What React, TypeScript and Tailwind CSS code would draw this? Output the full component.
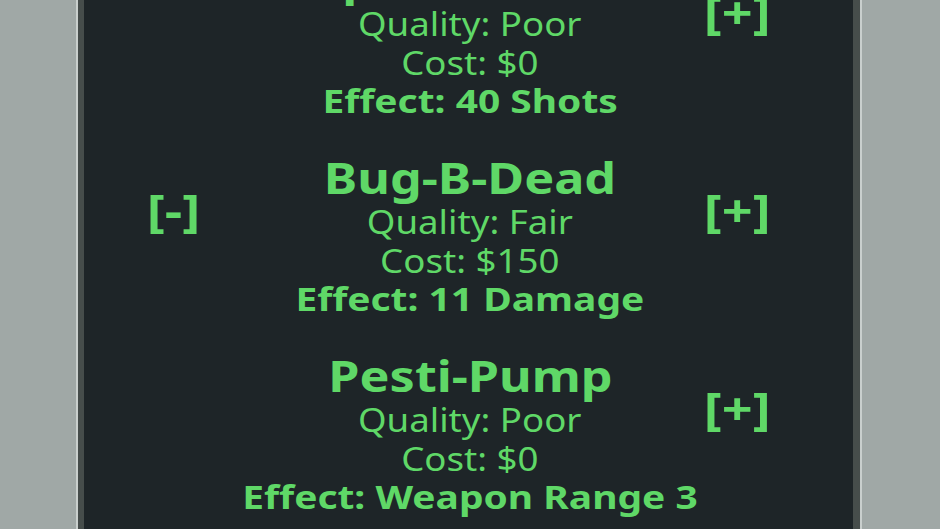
import React from "react";

type Item = {
  name: string;
  quality: string;
  cost: string;
  effect: string;
  minus: boolean;
};

const items: Item[] = [
  { name: "Spritz Bottle", quality: "Poor", cost: "$0", effect: "40 Shots", minus: false },
  { name: "Bug-B-Dead", quality: "Fair", cost: "$150", effect: "11 Damage", minus: true },
  { name: "Pesti-Pump", quality: "Poor", cost: "$0", effect: "Weapon Range 3", minus: false },
];

function Row({ item }: { item: Item }) {
  return (
    <div className="flex h-[166.5px]">
      <div className="w-[176px] flex justify-center pl-[3px]">
        {item.minus && (
          <span className="mt-[37px] block h-[42px] text-[44px] leading-[42px] font-bold scale-x-[1.24] whitespace-nowrap">
            [-]
          </span>
        )}
      </div>
      <div className="w-[420px] flex flex-col items-center">
        <p className="text-[43px] leading-[51px] font-bold scale-x-[1.17] whitespace-nowrap">{item.name}</p>
        <p className="text-[33px] leading-[38.5px] scale-x-[1.11] whitespace-nowrap">Quality: {item.quality}</p>
        <p className="text-[33px] leading-[38.5px] scale-x-[1.11] whitespace-nowrap">Cost: {item.cost}</p>
        <p className="text-[33px] leading-[38.5px] font-bold scale-x-[1.18] whitespace-nowrap">Effect: {item.effect}</p>
      </div>
      <div className="w-[172px] flex justify-start pl-[30px]">
        <span className="mt-[37px] block h-[42px] text-[44px] leading-[42px] font-bold scale-x-[1.23] whitespace-nowrap">
          [+]
        </span>
      </div>
    </div>
  );
}

export default function App() {
  return (
    <div className="h-[529px] w-[940px] overflow-hidden bg-[#a0a8a6] flex" style={{ fontFamily: '"Noto Sans", sans-serif' }}>
      <div className="ml-[76px] w-[786px] h-full border-x-2 border-[#c9cfcd]">
        <div className="h-full border-l-[6px] border-r-[7px] border-[#464d4b] bg-[#1e2528] overflow-hidden text-[#5fd867]">
          <div className="-mt-[46px] flex flex-col gap-[31.5px]">
            {items.map((it) => (
              <Row key={it.name} item={it} />
            ))}
          </div>
        </div>
      </div>
    </div>
  );
}
